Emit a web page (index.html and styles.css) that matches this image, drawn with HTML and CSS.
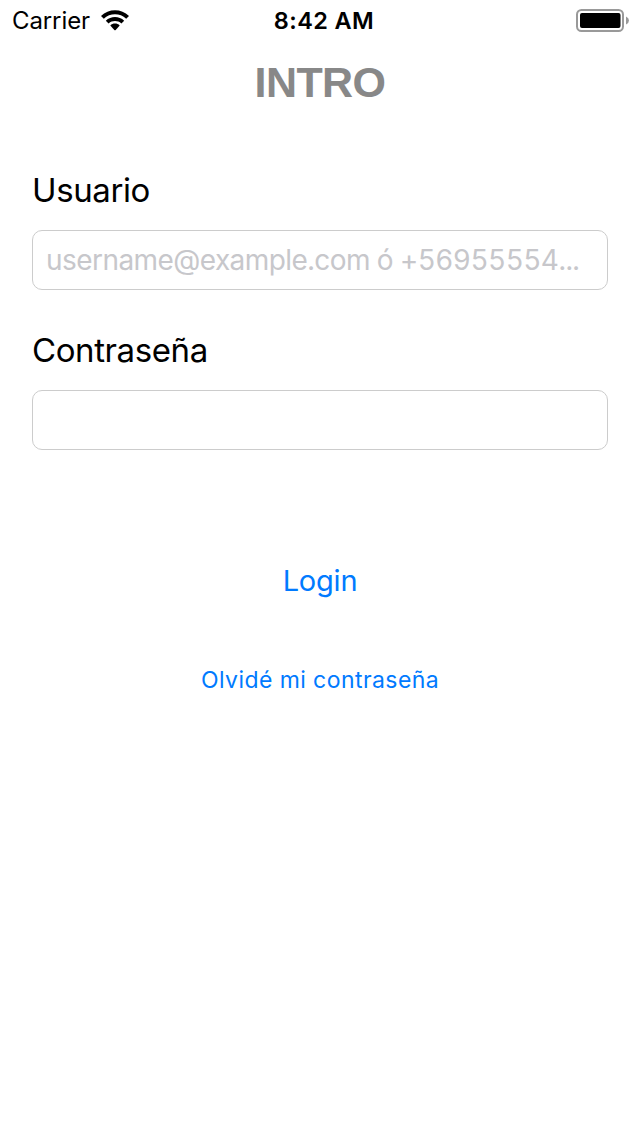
FILE: index.html
```html
<!DOCTYPE html>
<html lang="es">
<head>
    <meta charset="UTF-8">
    <meta name="viewport" content="width=device-width, initial-scale=1.0">
    <title>Intro</title>
    <link rel="stylesheet" href="styles.css">
</head>
<body>
    <header class="status-bar">
        <div class="carrier">
            <span class="carrier-name">Carrier</span>
            <svg class="wifi" width="28" height="21" viewBox="0 0 28 21">
                <path d="M0 5.9 C7.6 -1.7 20.4 -1.7 28 5.9 L25.2 8.7 C19 2.8 9 2.8 2.8 8.7 Z"/>
                <path d="M4.8 10.7 C9.9 5.7 18.1 5.7 23.2 10.7 L20.4 13.5 C16.8 10.3 11.2 10.3 7.6 13.5 Z"/>
                <path d="M9.3 15.4 C11.8 12.9 16.2 12.9 18.7 15.4 L14.7 19.9 Q14 20.6 13.3 19.9 Z"/>
            </svg>
        </div>
        <div class="time">8:42 AM</div>
        <svg class="battery" width="54" height="24" viewBox="0 0 54 24">
            <rect x="1" y="1" width="46" height="21" rx="4.5" fill="none" stroke="#999" stroke-width="2"/>
            <rect x="4" y="4" width="40.5" height="15" rx="2"/>
            <path d="M50 7.5 Q53 9 53 11.5 T50 15.5 Z" fill="#999"/>
        </svg>
    </header>
    <main>
        <h1>INTRO</h1>
        <form>
            <div class="field">
                <label for="username">Usuario</label>
                <input id="username" type="text" placeholder="username@example.com ó +56955554...">
            </div>
            <div class="field">
                <label for="password">Contraseña</label>
                <input id="password" type="password">
            </div>
            <button class="login" type="button">Login</button>
            <a class="forgot" href="#">Olvidé mi contraseña</a>
        </form>
    </main>
</body>
</html>
```
FILE: styles.css
```css
body {
    margin: 0;
    height: 1136px;
    background: #fff;
    color: #000;
    font-family: Inter, "Liberation Sans", sans-serif;
}
.status-bar {
    display: grid;
    grid-template-columns: 1fr auto 1fr;
    align-items: start;
    box-sizing: border-box;
    height: 41px;
    padding: 0 10px 0 12px;
    font-size: 24px;
    line-height: 42px;
}
.carrier {
    display: flex;
    align-items: center;
}
.carrier-name {
    letter-spacing: -0.1px;
}
.wifi {
    margin: 0 0 2px 11px;
}
.time {
    margin-left: 6px;
    font-weight: 580;
    font-size: 23.5px;
    letter-spacing: 0.4px;
}
.battery {
    justify-self: end;
    margin-top: 9px;
}
h1 {
    margin: 15px 0 0;
    height: 52px;
    line-height: 52px;
    text-align: center;
    color: #888;
    font-family: "Liberation Sans", sans-serif;
    font-size: 43px;
    letter-spacing: -0.6px;
}
form {
    display: flex;
    flex-direction: column;
    padding: 62px 32px 0;
}
.field {
    display: flex;
    flex-direction: column;
    height: 120px;
    margin-bottom: 40px;
}
label {
    height: 60px;
    line-height: 41px;
    font-size: 33px;
    letter-spacing: -0.4px;
}
input {
    box-sizing: border-box;
    width: 100%;
    height: 60px;
    padding: 0 13px;
    border: 1px solid #ccc;
    border-radius: 10px;
    background: #fff;
    font: 28px Inter, sans-serif;
    font-variant-numeric: tabular-nums;
    letter-spacing: -0.56px;
}
input::placeholder {
    color: #c7c7cb;
}
.login,
.forgot {
    align-self: center;
    color: #007aff;
}
.login {
    height: 60px;
    margin-top: 60px;
    padding: 0;
    border: 0;
    background: none;
    font: 29px Inter, sans-serif;
    letter-spacing: -0.2px;
}
.forgot {
    height: 40px;
    margin-top: 50px;
    line-height: 40px;
    font-size: 23px;
    letter-spacing: 0.43px;
    text-decoration: none;
}
```
